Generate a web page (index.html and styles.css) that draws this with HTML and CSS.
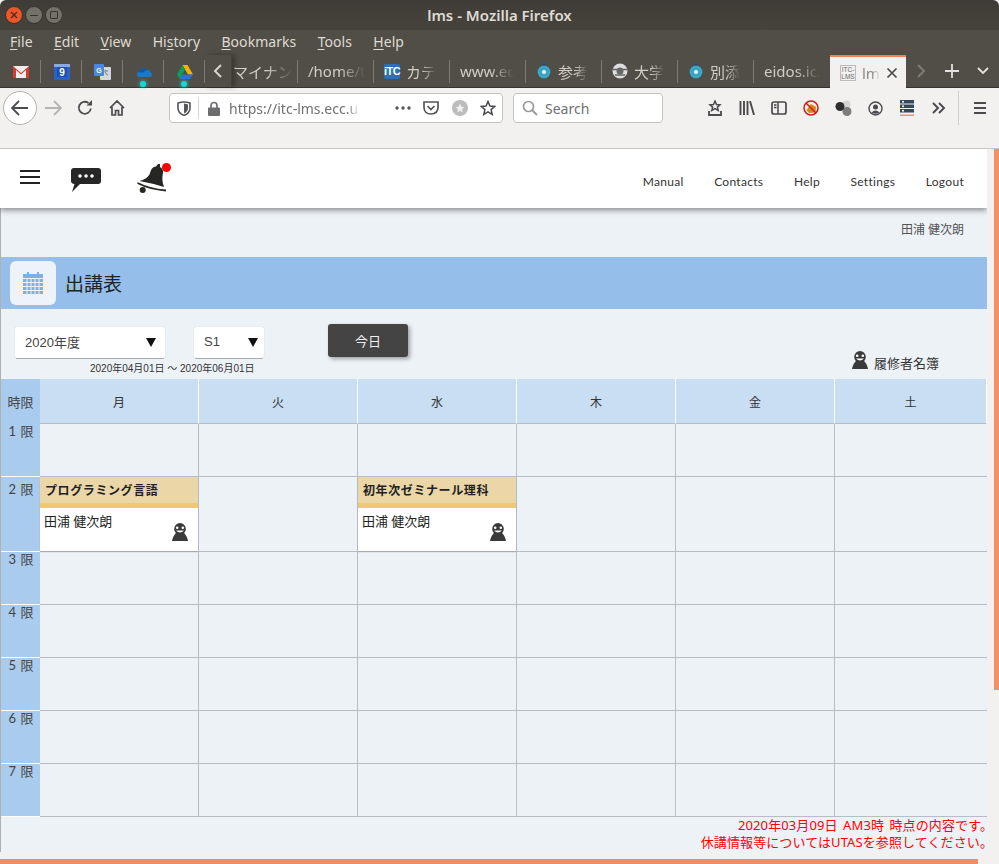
FILE: index.html
```html
<!DOCTYPE html>
<html lang="ja">
<head>
<meta charset="UTF-8">
<title>lms - Mozilla Firefox</title>
<link rel="stylesheet" href="styles.css">
</head>
<body>
<svg class="defs" width="0" height="0">
  <symbol id="person" viewBox="0 0 16 18">
    <path d="M0 18 C1 13 3 11 4 10 L12 10 C13 11 15 13 16 18Z" fill="#3a3a3a"/>
    <ellipse cx="8" cy="6" rx="5.800" ry="6" fill="#3a3a3a"/>
    <circle cx="5.200" cy="4.800" r="1.300" fill="#fff"/>
    <circle cx="10.800" cy="4.800" r="1.300" fill="#fff"/>
    <path d="M4 7.500 Q8 11.500 12 7.500Z" fill="#fff"/>
  </symbol>
  <symbol id="disc" viewBox="0 0 16 16">
    <rect x="6.500" y="0" width="3" height="4" fill="#1d4f91"/>
    <circle cx="8" cy="9" r="6.500" fill="#3ba6c4"/>
    <circle cx="8" cy="9" r="2" fill="#e8f4f8"/>
  </symbol>
</svg>

<header class="titlebar">
  <div class="winbtns">
    <span class="winbtn close"><svg width="8" height="8" viewBox="0 0 8 8"><path d="M1 1 L7 7 M7 1 L1 7" stroke="#5a2410" stroke-width="1.300"/></svg></span>
    <span class="winbtn"><i class="minbar"></i></span>
    <span class="winbtn"><i class="maxbox"></i></span>
  </div>
  <div class="wintitle">lms - Mozilla Firefox</div>
</header>

<nav class="menubar">
  <span><u>F</u>ile</span>
  <span><u>E</u>dit</span>
  <span><u>V</u>iew</span>
  <span>Hi<u>s</u>tory</span>
  <span><u>B</u>ookmarks</span>
  <span><u>T</u>ools</span>
  <span><u>H</u>elp</span>
</nav>

<div class="tabbar">
  <div class="pin">
    <svg width="16" height="12" viewBox="0 0 16 12"><rect width="16" height="12" fill="#eee"/><path d="M0 0 L8 7 L16 0 V12 H13 V4 L8 8.500 L3 4 V12 H0Z" fill="#d23f31"/></svg>
  </div>
  <div class="pin">
    <svg width="16" height="16" viewBox="0 0 16 16"><rect width="16" height="16" rx="1" fill="#2a62c9"/><rect width="16" height="3" fill="#8aa9e3"/><rect x="3" y="3" width="10" height="10" fill="#1f50ad"/><text x="8" y="12" class="cal-num">9</text></svg>
  </div>
  <div class="pin">
    <svg width="17" height="16" viewBox="0 0 17 16"><rect x="6" y="3" width="11" height="13" rx="1" fill="#d5d7da"/><rect width="10" height="12" rx="1" fill="#4a86e8"/><text x="5" y="9" class="g-mark">G</text><path d="M10 7 h4 M12 6 v1 M11 8 q1.500 3 3 3" stroke="#777" fill="none"/></svg>
  </div>
  <div class="pin">
    <svg width="16" height="10" viewBox="0 0 16 10"><path d="M4 10 C0 10 0 5 3 5 C4 1 9 0 11 3 C14 3 16 6 16 8 C16 9 15 10 14 10Z" fill="#1a78c8"/><path d="M3 5 C4 1 9 0 11 3 L6 6Z" fill="#0b5aa8"/></svg>
    <i class="livedot"></i>
  </div>
  <div class="pin">
    <svg width="16" height="14" viewBox="0 0 16 14"><path d="M5.500 0 H10.500 L16 9.500 H11Z" fill="#f4b400"/><path d="M5.500 0 L8 4.500 L2.800 14 L0 9.500Z" fill="#0f9d58"/><path d="M5.500 9.500 H16 L13.200 14 H2.800Z" fill="#2a6fdb"/></svg>
    <i class="livedot"></i>
  </div>
  <div class="tabscroll">
    <svg width="10" height="14" viewBox="0 0 10 14"><path d="M8 1 L2 7 L8 13" fill="none" stroke="#d6d4d0" stroke-width="2"/></svg>
  </div>
  <div class="tabs">
    <div class="tab first"><span class="tabtext">マイナン</span></div>
    <div class="tab"><span class="tabtext">/home/t</span></div>
    <div class="tab">
      <span class="itc">iTC</span>
      <span class="tabtext">カテ</span>
    </div>
    <div class="tab"><span class="tabtext">www.ec</span></div>
    <div class="tab">
      <svg class="favicon" width="16" height="16"><use href="#disc"/></svg>
      <span class="tabtext">参考</span>
    </div>
    <div class="tab">
      <svg class="favicon" width="16" height="16" viewBox="0 0 16 16"><circle cx="8" cy="8" r="7.500" fill="#ddd"/><circle cx="8" cy="8" r="3.500" fill="#666"/><path d="M1 6.500 H15 M3 12 L13 12" stroke="#666" stroke-width="1.500"/></svg>
      <span class="tabtext">大学</span>
    </div>
    <div class="tab">
      <svg class="favicon" width="16" height="16"><use href="#disc"/></svg>
      <span class="tabtext">別添</span>
    </div>
    <div class="tab"><span class="tabtext">eidos.ic.</span></div>
    <div class="tab active">
      <span class="lmsmark">ITC-<br>LMS</span>
      <span class="tabtext">lm</span>
      <svg class="tabclose" width="12" height="12" viewBox="0 0 12 12"><path d="M1.500 1.500 L10.500 10.500 M10.500 1.500 L1.500 10.500" stroke="#4a4a4a" stroke-width="1.700"/></svg>
    </div>
  </div>
  <div class="tabtools">
    <svg width="10" height="14" viewBox="0 0 10 14"><path d="M2 1 L8 7 L2 13" fill="none" stroke="#7f7c76" stroke-width="2"/></svg>
    <svg width="14" height="14" viewBox="0 0 14 14"><path d="M7 0 V14 M0 7 H14" stroke="#e4e2de" stroke-width="1.800"/></svg>
    <svg width="12" height="8" viewBox="0 0 12 8"><path d="M1 1 L6 6 L11 1" fill="none" stroke="#e4e2de" stroke-width="1.800"/></svg>
  </div>
</div>

<div class="toolbar">
  <div class="navbtns">
    <span class="backbtn">
      <svg width="18" height="16" viewBox="0 0 18 16"><path d="M8 1 L1 8 L8 15 M1 8 H17" fill="none" stroke="#4a4a4f" stroke-width="1.800"/></svg>
    </span>
    <span class="navbtn">
      <svg width="18" height="16" viewBox="0 0 18 16"><path d="M10 1 L17 8 L10 15 M17 8 H1" fill="none" stroke="#b5b4b2" stroke-width="1.800"/></svg>
    </span>
    <span class="navbtn">
      <svg width="16" height="16" viewBox="0 0 16 16"><path d="M13.800 8.500 A6 6 0 1 1 11.500 3" fill="none" stroke="#4a4a4f" stroke-width="1.800"/><path d="M9.500 5.500 L15 5.500 L15 0Z" fill="#4a4a4f"/></svg>
    </span>
    <span class="navbtn">
      <svg width="16" height="16" viewBox="0 0 16 16"><path d="M1 8 L8 1 L15 8 M3 7 V15 H6.500 V10.500 H9.500 V15 H13 V7" fill="none" stroke="#4a4a4f" stroke-width="1.700"/></svg>
    </span>
  </div>

  <div class="urlbar">
    <svg class="shield" width="14" height="15" viewBox="0 0 14 15"><path d="M1 2 Q7 0 13 2 V7 Q13 12 7 14.500 Q1 12 1 7Z" fill="none" stroke="#55555a" stroke-width="1.600"/><path d="M7 2.500 Q10 3 11 3.500 V7 Q11 10.500 7 12.500Z" fill="#55555a"/></svg>
    <i class="urlsep"></i>
    <svg class="lock" width="12" height="15" viewBox="0 0 12 15"><path d="M3 7 V4.500 A3 3 0 0 1 9 4.500 V7" fill="none" stroke="#6d6d6f" stroke-width="1.700"/><rect y="6.500" width="12" height="8.500" rx="1" fill="#6d6d6f"/></svg>
    <span class="urltext">https://itc-lms.ecc.u</span>
    <div class="urlicons">
      <svg width="16" height="4" viewBox="0 0 16 4"><circle cx="2" cy="2" r="1.700" fill="#55555a"/><circle cx="8" cy="2" r="1.700" fill="#55555a"/><circle cx="14" cy="2" r="1.700" fill="#55555a"/></svg>
      <svg width="16" height="14" viewBox="0 0 16 14"><path d="M1 1 H15 V6 Q15 13 8 13 Q1 13 1 6Z M4.500 5 L8 8.500 L11.500 5" fill="none" stroke="#55555a" stroke-width="1.700"/></svg>
      <svg width="16" height="16" viewBox="0 0 16 16"><circle cx="8" cy="8" r="8" fill="#bcbcbc"/><path d="M8 3.500 L9.300 6.700 L12.500 7 L10 9.200 L10.800 12.400 L8 10.700 L5.200 12.400 L6 9.200 L3.500 7 L6.700 6.700Z" fill="#f2f1ef"/></svg>
      <svg width="16" height="16" viewBox="0 0 16 16"><path d="M8 1.500 L9.900 6 L14.800 6.400 L11.100 9.600 L12.200 14.400 L8 11.900 L3.800 14.400 L4.900 9.600 L1.200 6.400 L6.100 6Z" fill="none" stroke="#4a4a4f" stroke-width="1.500"/></svg>
    </div>
  </div>

  <div class="searchbar">
    <svg width="16" height="16" viewBox="0 0 16 16"><circle cx="6.500" cy="6.500" r="5" fill="none" stroke="#9c9c9c" stroke-width="1.700"/><path d="M10.200 10.200 L15 15" stroke="#9c9c9c" stroke-width="2"/></svg>
    <span>Search</span>
  </div>

  <div class="extensions">
    <span class="ext"><svg width="14" height="16" viewBox="0 0 14 16"><path d="M7 1 L8.500 4.500 L12 4.800 L9.400 7.100 L10.200 10.500 L7 8.700 L3.800 10.500 L4.600 7.100 L2 4.800 L5.500 4.500Z" fill="none" stroke="#4a4a4f" stroke-width="1.500"/><path d="M1 11 V15 H13 V11" fill="none" stroke="#4a4a4f" stroke-width="1.800"/></svg></span>
    <span class="ext"><svg width="16" height="14" viewBox="0 0 16 14"><path d="M1.500 0 V14 M5 0 V14 M8.500 0 V14 M11 0 L15 14" stroke="#4a4a4f" stroke-width="1.900" fill="none"/></svg></span>
    <span class="ext"><svg width="16" height="14" viewBox="0 0 16 14"><rect x="1" y="1" width="14" height="12" rx="2" fill="none" stroke="#4a4a4f" stroke-width="1.700"/><path d="M7 1 V13 M3 4 H5.500 M3 6.500 H5.500" stroke="#4a4a4f" stroke-width="1.500"/></svg></span>
    <span class="ext"><svg width="16" height="16" viewBox="0 0 16 16"><circle cx="8" cy="8" r="7" fill="#fbeee0" stroke="#cc1a1a" stroke-width="1.500"/><path d="M3.500 10 L8 4 L13 7 L12.500 12.500 L6 13Z" fill="#d9861a"/><path d="M3 3 L13 13" stroke="#cc1a1a" stroke-width="1.500"/></svg></span>
    <span class="ext"><svg width="17" height="16" viewBox="0 0 17 16"><circle cx="11.500" cy="4.500" r="4" fill="#d4d4d4"/><circle cx="12" cy="11.500" r="4.500" fill="#7d7d7d"/><circle cx="5" cy="6.500" r="4.500" fill="#2e2e2e"/></svg></span>
    <span class="ext"><svg width="15" height="15" viewBox="0 0 15 15"><circle cx="7.500" cy="7.500" r="6.500" fill="none" stroke="#4a4a4f" stroke-width="1.400"/><circle cx="7.500" cy="6" r="2.500" fill="#4a4a4f"/><path d="M3.500 11.500 Q7.500 7.500 11.500 11.500 Q7.500 14 3.500 11.500Z" fill="#4a4a4f"/></svg></span>
    <span class="ext"><svg width="14" height="16" viewBox="0 0 14 16"><rect width="14" height="3.500" fill="#33475f"/><rect y="4.500" width="14" height="3.500" fill="#33475f"/><rect y="9" width="14" height="3.500" fill="#33475f"/><circle cx="3" cy="1.700" r="1" fill="#fff"/><circle cx="3" cy="6.200" r="1" fill="#fff"/><circle cx="3" cy="10.700" r="1" fill="#fff"/><rect y="14.500" width="14" height="1.500" fill="#f0935f"/></svg></span>
    <span class="ext"><svg width="14" height="12" viewBox="0 0 14 12"><path d="M1 1 L6 6 L1 11 M7 1 L12 6 L7 11" fill="none" stroke="#4a4a4f" stroke-width="1.900"/></svg></span>
  </div>
  <i class="toolsep"></i>
  <svg class="appmenu" width="12" height="12" viewBox="0 0 12 12"><path d="M0 1 H12 M0 6 H12 M0 11 H12" stroke="#4a4a4f" stroke-width="2"/></svg>
</div>

<div class="pagewrap">
  <main class="viewport">
    <div class="sitehead">
      <div class="headicons">
        <svg class="burger" width="20" height="14" viewBox="0 0 20 14"><path d="M0 1 H20 M0 7 H20 M0 13 H20" stroke="#222" stroke-width="2"/></svg>
        <svg class="chat" width="30" height="25" viewBox="0 0 30 25"><path d="M3 0 H27 Q30 0 30 3 V13 Q30 16 27 16 H9 L1 24 L3.500 16 Q0 15.500 0 13 V3 Q0 0 3 0Z" fill="#262626"/><circle cx="9" cy="8" r="1.800" fill="#fff"/><circle cx="15" cy="8" r="1.800" fill="#fff"/><circle cx="21" cy="8" r="1.800" fill="#fff"/></svg>
        <svg class="bell" width="36" height="32" viewBox="0 0 36 32"><path d="M21 1 L19 3.500 C15 4 14 7 13 10 C12 14 7 17 2.500 18 Q14 20 27 24 C25 19 25 14 26 10 C26.500 7 25 5 23 4 L23 1Z" fill="#262622"/><path d="M.5 20 Q12 26 29 27.500" fill="none" stroke="#262622" stroke-width="1.800"/><circle cx="5.700" cy="27" r="3" fill="#262622"/><circle cx="29.500" cy="4.500" r="4.500" fill="#f00"/></svg>
      </div>
      <nav class="headlinks">
        <a>Manual</a>
        <a>Contacts</a>
        <a>Help</a>
        <a>Settings</a>
        <a>Logout</a>
      </nav>
    </div>

    <div class="username">田浦 健次朗</div>

    <div class="pagetitle">
      <span class="titleicon">
        <svg width="20" height="22" viewBox="0 0 20 22">
          <path d="M0 2 H4 V0 H6 V2 H14 V0 H16 V2 H20 V22 H0Z" fill="#7fb0e4"/>
          <path d="M0 6.500 H20 M0 10.500 H20 M0 14.500 H20 M0 18.500 H20 M4 6 V22 M8 6 V22 M12 6 V22 M16 6 V22" stroke="#edf3f9" stroke-width="1"/>
        </svg>
      </span>
      <h1>出講表</h1>
    </div>

    <div class="controls">
      <div class="yearblock">
        <div class="select yearselect">2020年度<i class="caret"></i></div>
        <div class="daterange">2020年04月01日 ～ 2020年06月01日</div>
      </div>
      <div class="select termselect">S1<i class="caret"></i></div>
      <button class="todaybtn">今日</button>
      <div class="roster">
        <svg width="16" height="18"><use href="#person"/></svg>
        <span>履修者名簿</span>
      </div>
    </div>

    <div class="timetable">
      <div class="th period-h">時限</div>
      <div class="th">月</div>
      <div class="th">火</div>
      <div class="th">水</div>
      <div class="th">木</div>
      <div class="th">金</div>
      <div class="th">土</div>

      <div class="period">1 限</div>
      <div class="cell"></div><div class="cell"></div><div class="cell"></div><div class="cell"></div><div class="cell"></div><div class="cell"></div>

      <div class="period tall">2 限</div>
      <div class="cell">
        <div class="course">
          <div class="coursename">プログラミング言語</div>
          <div class="coursebody">田浦 健次朗
            <svg class="courseperson" width="16" height="18"><use href="#person"/></svg>
          </div>
        </div>
      </div>
      <div class="cell"></div>
      <div class="cell">
        <div class="course">
          <div class="coursename">初年次ゼミナール理科</div>
          <div class="coursebody">田浦 健次朗
            <svg class="courseperson" width="16" height="18"><use href="#person"/></svg>
          </div>
        </div>
      </div>
      <div class="cell"></div><div class="cell"></div><div class="cell"></div>

      <div class="period">3 限</div>
      <div class="cell"></div><div class="cell"></div><div class="cell"></div><div class="cell"></div><div class="cell"></div><div class="cell"></div>

      <div class="period">4 限</div>
      <div class="cell"></div><div class="cell"></div><div class="cell"></div><div class="cell"></div><div class="cell"></div><div class="cell"></div>

      <div class="period">5 限</div>
      <div class="cell"></div><div class="cell"></div><div class="cell"></div><div class="cell"></div><div class="cell"></div><div class="cell"></div>

      <div class="period">6 限</div>
      <div class="cell"></div><div class="cell"></div><div class="cell"></div><div class="cell"></div><div class="cell"></div><div class="cell"></div>

      <div class="period">7 限</div>
      <div class="cell"></div><div class="cell"></div><div class="cell"></div><div class="cell"></div><div class="cell"></div><div class="cell"></div>
    </div>

    <div class="notice">
      2020年03月09日 AM3時 時点の内容です。<br>
      休講情報等についてはUTASを参照してください。
    </div>
  </main>
  <div class="vscroll"><div class="vthumb"></div></div>
</div>
<div class="hscroll"><div class="hthumb"></div></div>
</body>
</html>
```

FILE: styles.css
```css
* { box-sizing: border-box; }
html, body { margin: 0; height: 864px; overflow: hidden; }
body { background: #f2f1ef; font-family: "Noto Sans", "Noto Sans CJK JP", sans-serif; }
.defs { position: absolute; }
i { display: block; }

/* window frame */
.titlebar { height: 30px; display: flex; align-items: center; position: relative; background: linear-gradient(#3f3c37, #47443e); border-radius: 6px 6px 0 0; }
.winbtns { display: flex; gap: 2px; padding-left: 5px; }
.winbtn { width: 18px; height: 18px; border-radius: 50%; background: #74716b; border: 1px solid #35332e; display: flex; align-items: center; justify-content: center; }
.winbtn.close { background: #e9572a; }
.minbar { width: 8px; height: 1px; background: #35332e; }
.maxbox { width: 8px; height: 8px; border: 1px solid #35332e; border-radius: 1px; }
.wintitle { position: absolute; left: 0; right: 0; text-align: center; color: #dfdbd2; font-size: 15px; font-weight: 600; }

.menubar { height: 25px; background: #514e47; color: #dfdbd2; font-size: 14px; letter-spacing: .05px; display: flex; gap: 21.300px; padding: 2px 0 0 10px; }
.menubar u { text-underline-offset: 2px; }

/* tabs */
.tabbar { height: 33px; background: #514e47; display: flex; border-bottom: 1px solid #35332e; }
.pin { width: 41px; flex: none; position: relative; display: flex; align-items: center; justify-content: center; padding-top: 2px; }
.pin::after { content: ""; position: absolute; right: 0; top: 5px; height: 23px; width: 1px; background: #7d7a73; }
.cal-num { font: bold 10px "Liberation Sans", sans-serif; fill: #fff; text-anchor: middle; }
.g-mark { font: bold 7px "Liberation Sans", sans-serif; fill: #fff; text-anchor: middle; }
.livedot { position: absolute; bottom: 0; left: 17px; width: 6px; height: 6px; border-radius: 50%; background: #18d6d6; box-shadow: 0 0 4px #18d6d6; }
.tabscroll { width: 27px; flex: none; display: flex; align-items: center; justify-content: center; border-right: 1px solid #45423c; box-shadow: 3px 0 5px rgba(0, 0, 0, .3); }
.tabs { display: flex; flex: none; }
.tab { width: 76px; flex: none; display: flex; align-items: center; gap: 6px; padding: 0 4px 0 10px; position: relative; color: #d0cdc7; font-size: 15px; white-space: nowrap; }
.tab.first { width: 66px; padding-left: 1px; }
.tab::after { content: ""; position: absolute; right: 0; top: 5px; height: 23px; width: 1px; background: #7d7a73; }
.tab:nth-child(8)::after, .tab.active::after { display: none; }
.tabtext { -webkit-mask-image: linear-gradient(90deg, #000 55%, transparent); mask-image: linear-gradient(90deg, #000 55%, transparent); }
.favicon { flex: none; }
.itc { flex: none; width: 16px; height: 15px; font: bold 11px/15px "Liberation Sans", sans-serif; letter-spacing: -.5px; color: #fff; background: #2f6fb5; text-align: center; border-radius: 2px; }
.tab.active { background: #f2f1ef; color: #8a8a8a; border-top: 2px solid #f0805a; margin-bottom: -1px; padding: 0 10px 0 10px; }
.lmsmark { flex: none; width: 16px; border: 1px solid #bbb; font: 6.500px/7px "Liberation Sans", sans-serif; color: #666; text-align: center; }
.tabclose { flex: none; margin-left: auto; }
.tabtools { flex: 1; display: flex; align-items: center; justify-content: space-between; padding: 0 10px; }

/* nav toolbar */
.toolbar { height: 61px; display: flex; align-items: flex-start; padding: 3px 0 0 3px; background: #f2f1ef; border-bottom: 1px solid #c8c7c4; }
.navbtns { display: flex; align-items: center; height: 34px; width: 166px; flex: none; }
.backbtn { width: 34px; height: 34px; border-radius: 50%; background: #fff; border: 1px solid #b5b4b2; display: flex; align-items: center; justify-content: center; }
.navbtn { width: 32px; display: flex; justify-content: center; }
.urlbar { width: 334px; height: 30px; margin-top: 2px; flex: none; background: #fff; border: 1px solid #c5c4c1; border-radius: 4px; display: flex; align-items: center; padding-left: 7px; }
.urlsep { width: 1px; height: 22px; background: #d5d4d2; margin: 0 9px 0 7px; }
.urltext { width: 131px; margin-left: 9px; color: #707072; font-size: 14px; white-space: nowrap; -webkit-mask-image: linear-gradient(90deg, #000 90%, transparent); mask-image: linear-gradient(90deg, #000 90%, transparent); }
.urlicons { flex: 1; display: flex; align-items: center; justify-content: space-between; padding: 0 6px 0 35px; }
.searchbar { width: 150px; height: 30px; margin: 2px 0 0 10px; flex: none; background: #fff; border: 1px solid #c5c4c1; border-radius: 4px; display: flex; align-items: center; gap: 7px; padding-left: 8px; color: #707072; font-size: 14px; }
.extensions { display: flex; margin-left: 36px; height: 34px; align-items: center; }
.ext { width: 32px; display: flex; justify-content: center; }
.toolsep { width: 1px; height: 34px; background: #d0cfcc; margin-left: 3px; }
.appmenu { margin: 11px 0 0 15px; }

/* page */
.pagewrap { display: flex; height: 703px; }
.viewport { width: 987px; flex: none; background: #edf2f7; border-left: 1px solid #b0b0b0; font-family: "Lato", "Noto Sans CJK JP", sans-serif; color: #333; }
.vscroll { flex: 1; padding-left: 7px; }
.vthumb { height: 541px; background: #f49068; }
.hscroll { height: 12px; padding-top: 7px; }
.hthumb { width: 978px; height: 5px; background: #ee8e66; }

.sitehead { height: 59px; margin-left: -1px; background: #fff; box-shadow: 0 2px 6px rgba(0, 0, 0, .45); clip-path: inset(0 0 -10px 0); display: flex; justify-content: space-between; position: relative; }
.headicons { display: flex; align-items: flex-start; padding-left: 20px; }
.burger { margin-top: 21px; }
.chat { margin: 19px 0 0 31px; }
.bell { margin: 14px 0 0 36px; }
.headlinks { display: flex; gap: 30.500px; padding: 26px 23px 0 0; font-size: 12px; letter-spacing: .3px; line-height: 14px; color: #333; }

.username { height: 49px; padding: 14px 23px 0 0; text-align: right; font-size: 12px; line-height: 16px; color: #555; }

.pagetitle { height: 52px; background: #95bfea; display: flex; align-items: center; padding-left: 9px; }
.titleicon { width: 46px; height: 44px; background: #edf3f9; border-radius: 6px; display: flex; align-items: center; justify-content: center; }
.pagetitle h1 { margin: 0 0 2px 9px; font-size: 19px; font-weight: 400; color: #222; }

.controls { height: 70px; display: flex; align-items: flex-start; padding: 18px 0 0 14px; }
.yearblock { width: 150px; flex: none; }
.select { height: 31px; padding: 0 9px 2px 10px; background: #fff; border-radius: 2px; box-shadow: 0 2px 0 -1px #aaa, 0 0 1px #bbb; display: flex; align-items: center; justify-content: space-between; font: 13px "Liberation Sans", "Noto Sans CJK JP", sans-serif; color: #444; }
.caret { width: 0; height: 0; margin-top: 2px; border: 5px solid transparent; border-top: 9px solid #111; border-bottom: 0; }
.daterange { margin: 5px 0 0 75px; font: 10px/12px "Liberation Sans", "Noto Sans CJK JP", sans-serif; white-space: nowrap; color: #333; }
.termselect { width: 70px; margin-left: 29px; flex: none; padding-right: 6px; }
.todaybtn { width: 80px; height: 33px; margin: -3px 0 0 64px; flex: none; background: #444; border: 0; border-radius: 3px; box-shadow: 2px 2px 4px rgba(0, 0, 0, .35); color: #eee; font: 13px "Lato", "Noto Sans CJK JP", sans-serif; }
.roster { margin: 24px 48px 0 auto; display: flex; align-items: flex-start; gap: 6px; font-size: 13px; line-height: 18px; color: #333; }
.roster span { margin-top: 3px; }

/* timetable */
.timetable { display: grid; grid-template-columns: 39px repeat(5, 159px) 152px; grid-template-rows: 45px 53px 75px repeat(5, 53px); font-size: 12px; }
.th { background: #c9ddf3; border-right: 1px solid #fff; border-bottom: 1px solid #b8bcc4; display: flex; align-items: center; justify-content: center; color: #333; }
.th:last-child { border-right: 0; }
.th.period-h { background: #a9cbee; border-right: 0; color: #444; border-bottom-color: #a9cbee; font-size: 13px; }
.period { background: #a9cbee; border-bottom: 1px solid #fff; padding-left: 1px; text-align: center; font-size: 13px; line-height: 15px; word-spacing: 1px; color: #444; }
.period.tall { padding-top: 5px; }
.cell { border-right: 1px solid #b8bcc4; border-bottom: 1px solid #b8bcc4; }
.cell:nth-child(7n) { border-right: 0; }
.course { height: 74px; background: #fff; display: flex; flex-direction: column; box-shadow: 0 1px 1px #aaa; }
.coursename { height: 31px; flex: none; padding: 5px 0 0 5px; background: #ead6a7; border-bottom: 5px solid #efc873; font-weight: 700; letter-spacing: .6px; line-height: 18px; color: #222; white-space: nowrap; }
.coursebody { flex: 1; position: relative; padding: 4px 0 0 4px; font-size: 13px; line-height: 18px; color: #222; }
.courseperson { position: absolute; right: 10px; bottom: 10px; }

.notice { margin-right: -6px; text-align: right; font-family: "Noto Sans", "Noto Sans CJK JP", sans-serif; color: #f00; font-size: 13px; letter-spacing: .1px; word-spacing: 2px; line-height: 17px; }
```
